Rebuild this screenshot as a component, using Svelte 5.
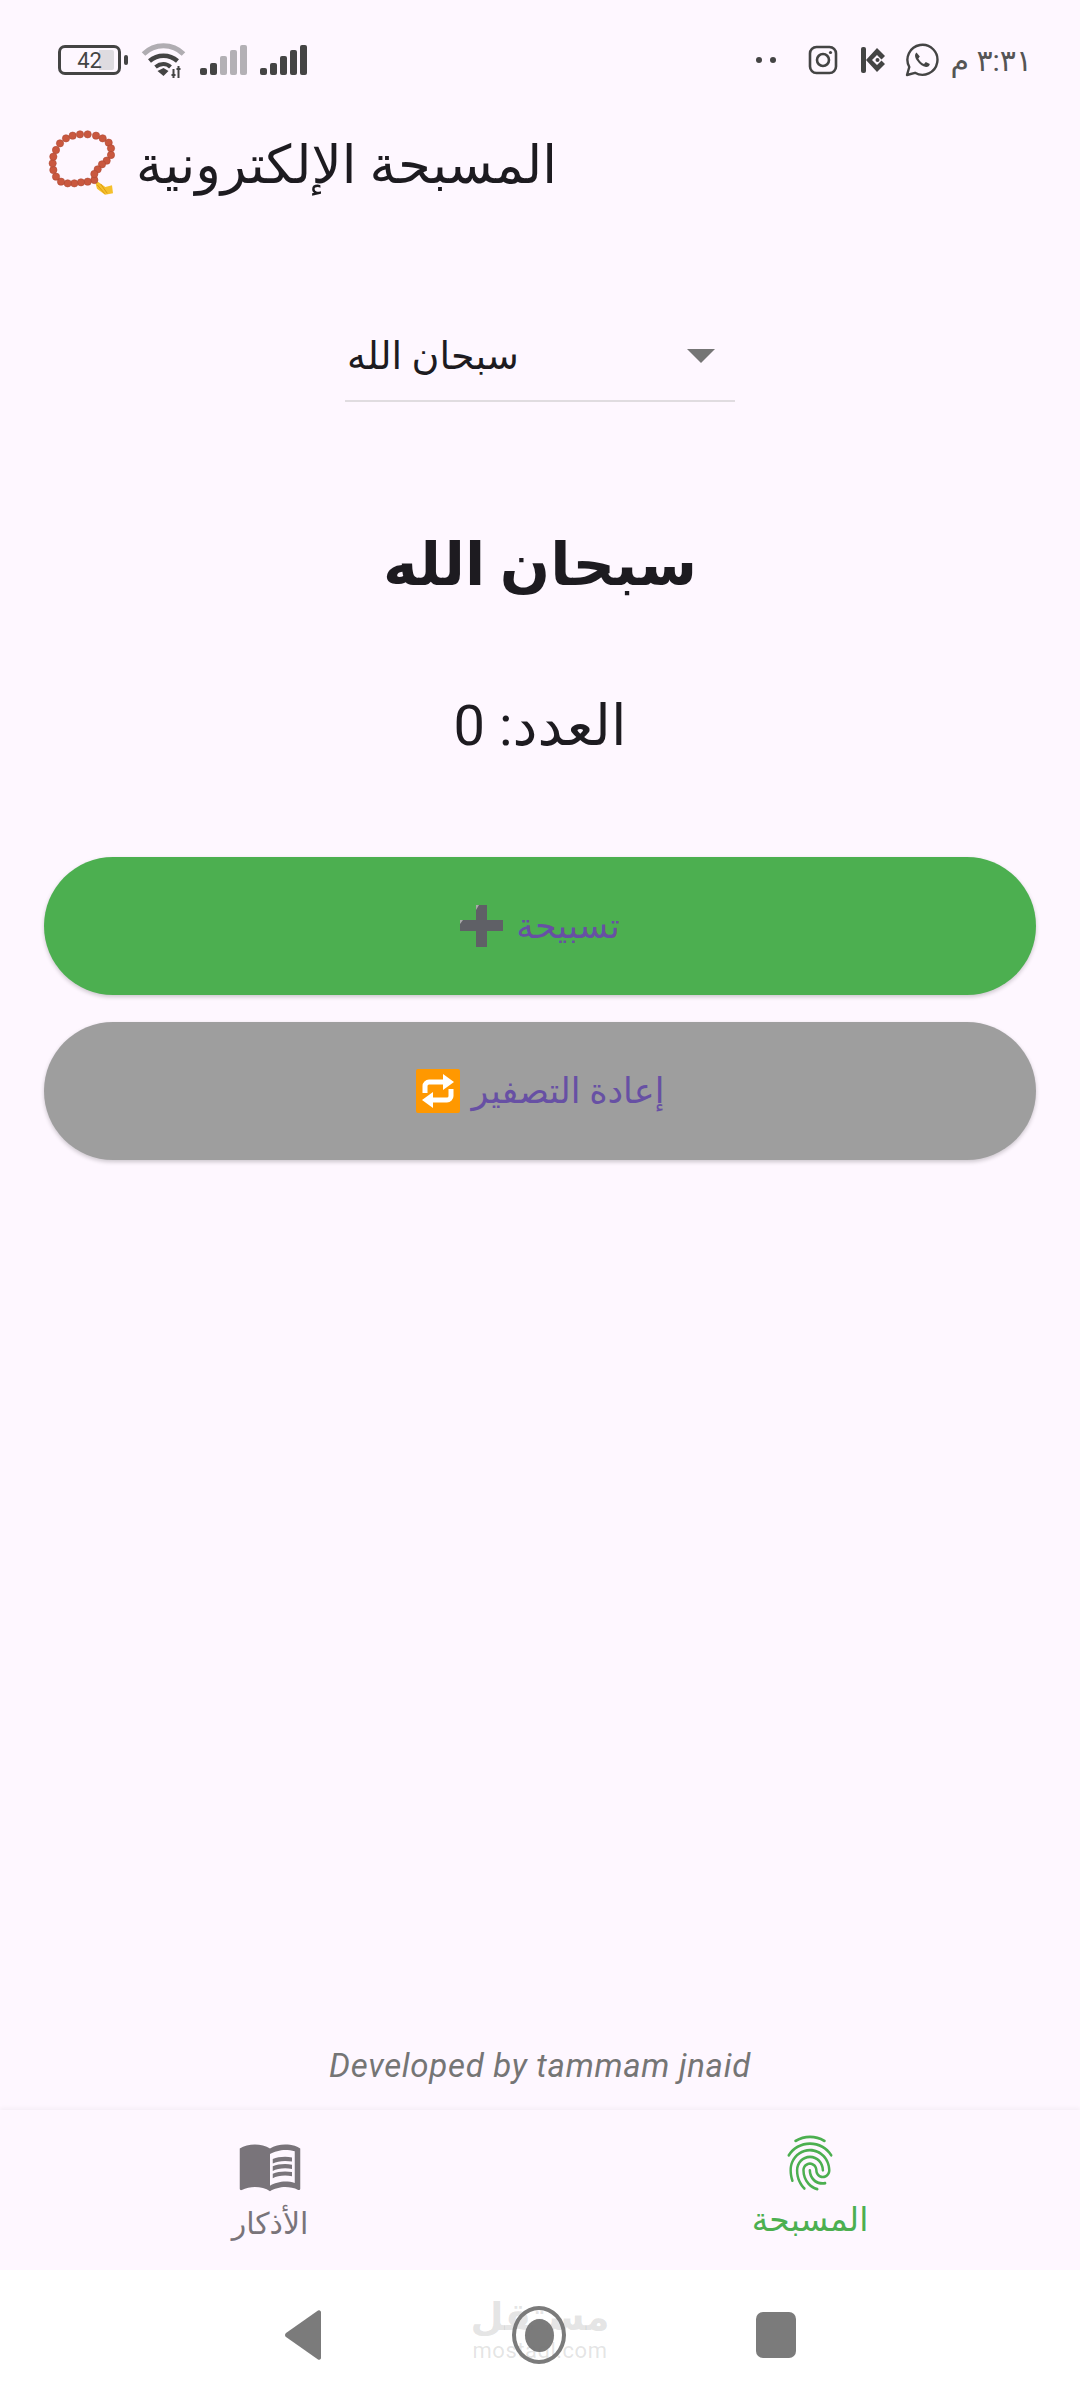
<script>
	// bead centres read off the reference, in 3x units
	const beads = [
		[275,480],[255,485],[235,487],[215,490],[195,490],[175,485],[160,470],[152,450],[150,430],
		[152,410],[160,390],[172,370],[190,355],[210,347],[232,343],[255,343],[280,347],[300,355],
		[318,368],[325,385],[325,405],[312,422],[298,433],[285,448],[275,462]
	];
	const dhikr = 'سبحان الله';
	let count = 0;
</script>

<div class="page">
	<header class="status">
		<div class="status-left">
			<div class="battery">
				<span class="level"></span>
				<span class="num">42</span>
				<span class="cap"></span>
			</div>
			<svg class="wifi" viewBox="0 0 46 36" width="47" height="36">
				<path d="M3 12C14 1 32 1 43 12" fill="none" stroke="#b0adb2" stroke-width="5"/>
				<path d="M9 19c8-7 20-7 28 0" fill="none" stroke="#444" stroke-width="4.500"/>
				<path d="M15 25c5-4 11-4 15 0" fill="none" stroke="#444" stroke-width="4"/>
				<path d="M17 29l6-3 5 3-5 5z" fill="#444"/>
				<path d="M33 36v-9M38 24v12M36 27h4M31 33h4" stroke="#444" stroke-width="2" fill="none"/>
			</svg>
			<div class="bars">
				<i class="b1 on"></i><i class="b2 on"></i><i class="b3"></i><i class="b4"></i><i class="b5"></i>
			</div>
			<div class="bars">
				<i class="b1 on"></i><i class="b2 on"></i><i class="b3 on"></i><i class="b4 on"></i><i class="b5 on"></i>
			</div>
		</div>
		<div class="status-right">
			<div class="dots"><i></i><i></i></div>
			<svg viewBox="0 0 30 30" width="30" height="30" fill="none" stroke="#444" stroke-width="2.600">
				<rect x="2" y="2" width="26" height="26" rx="6.500"/>
				<circle cx="15" cy="15" r="6"/>
				<circle cx="22.500" cy="7.500" r="1.600" fill="#444" stroke="none"/>
			</svg>
			<svg class="ku" viewBox="0 0 26 30" width="26" height="30">
				<rect x="1" y="2" width="5" height="26" rx="2" fill="#444"/>
				<path d="M6 15L17 3l8 8-3.500 3.500L17 10l-5 5 5 5 4.500-4.500L25 19l-8 8z" fill="#444"/>
				<circle cx="17.500" cy="15" r="2" fill="#444"/>
			</svg>
			<svg class="wa" viewBox="0 0 34 34" width="34" height="34" fill="none" stroke="#444" stroke-width="2.400">
				<path d="M2 32l2.300-8A15 15 0 1 1 10 29.800z" stroke-linejoin="round"/>
				<path d="M11.500 9.500c-2 1.500-2 4.500.5 8 2.500 3.500 5.500 6 9 6.500 2 .2 3.500-1.200 3.800-3l-4-2-1.800 2c-2-.7-4.500-3-5.700-5.500l1.500-2z" fill="#444" stroke="none"/>
			</svg>
			<span class="time">٣:٣١ م</span>
		</div>
	</header>

	<div class="appbar">
		<svg class="rosary" viewBox="130 330 210 210" width="70" height="70">
			<path d="M278 488l8-3 22 16 20-5 3 24-24 4-24-18z" fill="#f5c02c"/>
			<path d="M284 495l22 26M294 492l20 28" stroke="#dd9a12" stroke-width="3" fill="none"/>
			{#each beads as b}
				<circle cx={b[0]} cy={b[1]} r="11" fill="#c9583f" stroke="#a8452f" stroke-width="1.500"/>
			{/each}
		</svg>
		<h1 dir="rtl">المسبحة الإلكترونية</h1>
	</div>

	<main>
		<div class="select">
			<span dir="rtl">{dhikr}</span>
			<i class="caret"></i>
		</div>
		<h2 dir="rtl">{dhikr}</h2>
		<p class="count" dir="rtl">العدد: {count}</p>

		<button class="btn green" onclick={() => count++}>
			<svg viewBox="0 0 44 44" width="44" height="44">
				<path d="M16 1h11v15h16v11H27v16H16V27H0V16h16z" fill="#5f6066"/>
				<path d="M16 1h3l-3 5zM0 16h3l-3 4z" fill="#aaa"/>
			</svg>
			<span dir="rtl">تسبيحة</span>
		</button>
		<button class="btn grey" onclick={() => count = 0}>
			<svg viewBox="0 0 44 44" width="44" height="44">
				<rect width="44" height="44" rx="2" fill="#ff9800"/>
				<path d="M9 24v-7a4 4 0 0 1 4-4h16M35 20v7a4 4 0 0 1-4 4H15" fill="none" stroke="#fff" stroke-width="5"/>
				<path d="M27 5l11 8-11 8zM17 23L6 31l11 8z" fill="#fff"/>
			</svg>
			<span dir="rtl">إعادة التصفير</span>
		</button>
	</main>

	<p class="credit">Developed by tammam jnaid</p>

	<nav class="tabs">
		<div class="tab">
			<svg viewBox="0 0 24 24" width="66" height="66" fill="#79747a">
				<path d="M21 5c-1.110-.35-2.330-.5-3.500-.5-1.950 0-4.050.4-5.500 1.500-1.450-1.100-3.550-1.500-5.500-1.500S2.450 4.900 1 6v14.650c0 .25.25.5.5.5.1 0 .15-.05.25-.05C3.100 20.450 5.050 20 6.500 20c1.950 0 4.050.4 5.500 1.500 1.350-.85 3.800-1.500 5.500-1.500 1.650 0 3.350.3 4.750 1.050.1.05.15.05.25.05.25 0 .5-.25.5-.5V6c-.6-.45-1.250-.75-2-1zm0 13.500c-1.100-.35-2.300-.5-3.500-.5-1.700 0-4.150.65-5.500 1.500V8c1.350-.85 3.800-1.500 5.500-1.500 1.200 0 2.400.15 3.500.5v11.500z"/>
				<path d="M17.500 10.500c.88 0 1.730.09 2.500.26V9.240c-.79-.15-1.640-.24-2.500-.24-1.700 0-3.240.29-4.500.83v1.660c1.130-.64 2.700-.99 4.500-.99zM13 12.490v1.660c1.130-.64 2.700-.99 4.500-.99.88 0 1.730.09 2.500.26V11.900c-.79-.15-1.640-.24-2.500-.24-1.700 0-3.240.3-4.500.83zM17.500 14.330c-1.700 0-3.240.29-4.500.83v1.660c1.130-.64 2.700-.99 4.500-.99.88 0 1.730.09 2.500.26v-1.520c-.79-.16-1.640-.24-2.500-.24z"/>
			</svg>
			<span dir="rtl">الأذكار</span>
		</div>
		<div class="tab active">
			<svg viewBox="0 0 24 24" width="60" height="66" preserveAspectRatio="none" fill="#4caf50">
				<path d="M17.810 4.470c-.08 0-.16-.02-.23-.06C15.660 3.420 14 3 12.010 3c-1.980 0-3.860.47-5.570 1.410-.24.13-.54.04-.68-.2-.13-.24-.04-.55.2-.68C7.820 2.520 9.860 2 12.010 2c2.130 0 3.990.47 6.030 1.520.25.13.34.43.21.67-.09.18-.26.28-.44.28zM3.500 9.720c-.1 0-.2-.03-.29-.09-.23-.16-.28-.47-.12-.7.99-1.400 2.250-2.500 3.750-3.270C9.980 4.040 14 4.030 17.150 5.650c1.500.77 2.760 1.860 3.750 3.250.16.22.11.54-.12.7-.23.16-.54.11-.7-.12-.9-1.260-2.040-2.250-3.390-2.940-2.870-1.470-6.540-1.470-9.400.01-1.360.7-2.500 1.700-3.400 2.960-.08.14-.23.21-.39.21zm6.250 12.070c-.13 0-.26-.05-.35-.15-.87-.87-1.340-1.430-2.010-2.640-.69-1.230-1.050-2.730-1.050-4.340 0-2.970 2.540-5.390 5.660-5.390s5.660 2.420 5.660 5.390c0 .28-.22.5-.5.5s-.5-.22-.5-.5c0-2.420-2.090-4.390-4.660-4.390-2.570 0-4.660 1.970-4.660 4.390 0 1.440.32 2.770.93 3.850.64 1.150 1.080 1.640 1.850 2.420.19.2.19.51 0 .71-.11.1-.24.15-.37.15zm7.170-1.850c-1.190 0-2.240-.3-3.100-.89-1.490-1.010-2.380-2.650-2.380-4.390 0-.28.22-.5.5-.5s.5.22.5.5c0 1.410.72 2.740 1.940 3.560.71.48 1.540.71 2.540.71.24 0 .64-.03 1.040-.1.27-.05.53.13.58.41.05.27-.13.53-.41.58-.57.11-1.070.12-1.210.12zM14.910 22c-.04 0-.09-.01-.13-.02-1.590-.44-2.630-1.030-3.720-2.100-1.400-1.390-2.170-3.240-2.170-5.220 0-1.620 1.380-2.940 3.080-2.940 1.700 0 3.080 1.320 3.080 2.940 0 1.070.93 1.940 2.080 1.940s2.080-.87 2.080-1.940c0-3.770-3.250-6.830-7.250-6.830-2.840 0-5.440 1.580-6.610 4.030-.39.81-.59 1.760-.59 2.800 0 .78.07 2.010.67 3.610.1.26-.03.55-.29.64-.26.1-.55-.04-.64-.29-.49-1.310-.73-2.610-.73-3.960 0-1.200.23-2.290.68-3.240 1.330-2.790 4.280-4.600 7.510-4.600 4.550 0 8.250 3.510 8.250 7.830 0 1.620-1.380 2.940-3.080 2.940s-3.080-1.320-3.080-2.940c0-1.070-.93-1.940-2.080-1.940s-2.080.87-2.080 1.940c0 1.710.66 3.310 1.870 4.510.95.94 1.860 1.460 3.270 1.850.27.07.42.35.35.61-.05.23-.26.38-.47.38z"/>
			</svg>
			<span dir="rtl">المسبحة</span>
		</div>
	</nav>

	<div class="sysnav">
		<svg viewBox="0 0 38 54" width="38" height="54">
			<path d="M34 2.500a2 2 0 0 1 3 1.500v46a2 2 0 0 1-3 1.500L2 29a2.500 2.500 0 0 1 0-4z" fill="#7b7b7b"/>
		</svg>
		<div class="home"><i></i></div>
		<span class="recent"></span>
		<div class="mark">
			<b dir="rtl">مستقل</b>
			<span>mostaql.com</span>
		</div>
	</div>
</div>

<style>
	:global(body) {
		margin: 0;
		background: #fef7ff;
	}

	.page {
		position: relative;
		height: 2400px;
		display: flex;
		flex-direction: column;
		background: #fef7ff;
		color: #1d1b20;
		font-family: Roboto, "DejaVu Sans", sans-serif;
		overflow: hidden;
	}

	/* status bar */
	.status {
		height: 120px;
		flex: none;
		display: flex;
		align-items: center;
		justify-content: space-between;
		padding: 0 48px 0 58px;
	}
	.status-left, .status-right {
		display: flex;
		align-items: center;
	}
	.status-left { gap: 13px; }
	.status-right { gap: 22px; }
	.battery {
		position: relative;
		width: 63px;
		height: 30px;
		border: 3px solid #444;
		border-radius: 7px;
		box-sizing: border-box;
		margin-right: 6px;
		display: flex;
		align-items: center;
		justify-content: center;
	}
	.level {
		position: absolute;
		left: 38px; top: 2px; bottom: 2px;
		width: 15px;
		background: #dedbe0;
		border-radius: 0 2px 2px 0;
	}
	.num {
		position: relative;
		font-size: 22px;
		color: #444;
	}
	.cap {
		position: absolute;
		right: -10px; top: 7px;
		width: 4px;
		height: 10px;
		background: #444;
		border-radius: 2px;
	}
	.bars {
		display: flex;
		align-items: flex-end;
		gap: 3px;
		height: 30px;
	}
	.bars i {
		width: 7px;
		background: #b3b0b5;
		border-radius: 2px;
	}
	.bars i.on { background: #444; }
	.b1 { height: 7px; }
	.b2 { height: 12px; }
	.b3 { height: 19px; }
	.b4 { height: 25px; }
	.b5 { height: 30px; }
	.dots {
		display: flex;
		gap: 8px;
		margin-right: 10px;
	}
	.dots i {
		width: 6px;
		height: 6px;
		background: #444;
		border-radius: 50%;
	}
	.wa { margin-left: -3px; }
	.time {
		font-size: 30px;
		color: #555;
		direction: rtl;
		margin-left: -11px;
	}

	/* app bar */
	.appbar {
		height: 90px;
		flex: none;
		display: flex;
		align-items: center;
		gap: 20px;
		padding-left: 46px;
	}
	h1 {
		margin: 0;
		font-size: 53px;
		font-weight: 400;
	}

	/* content */
	main {
		flex: 1;
		display: flex;
		flex-direction: column;
		align-items: center;
		padding: 0 44px;
	}
	.select {
		width: 390px;
		height: 82px;
		margin-top: 110px;
		box-sizing: border-box;
		border-bottom: 2px solid #e0dce0;
		display: flex;
		align-items: center;
		justify-content: space-between;
		padding: 0 20px 8px 2px;
		font-size: 38px;
	}
	.caret {
		width: 0;
		height: 0;
		border: 14px solid transparent;
		border-top-color: #757575;
		border-bottom: 0;
	}
	h2 {
		margin: 112px 0 0;
		height: 102px;
		line-height: 102px;
		font-size: 59px;
		font-weight: 700;
	}
	.count {
		margin: 80px 0 0;
		height: 60px;
		line-height: 60px;
		font-size: 56px;
	}
	.btn {
		width: 100%;
		height: 138px;
		flex: none;
		margin-top: 101px;
		border: 0;
		border-radius: 69px;
		display: flex;
		align-items: center;
		justify-content: center;
		gap: 12px;
		font: inherit;
		font-size: 35px;
		color: #6750a4;
		box-shadow: 0 2px 4px rgba(0,0,0,.2);
	}
	.btn.green { background: #4caf50; }
	.btn.grey {
		background: #9e9e9e;
		margin-top: 27px;
	}

	.credit {
		margin: 0 0 22px;
		height: 44px;
		line-height: 44px;
		text-align: center;
		font-size: 33px;
		font-style: italic;
		color: #757575;
		letter-spacing: .7px;
	}

	/* bottom tabs */
	.tabs {
		height: 160px;
		flex: none;
		display: flex;
		background: #fef7ff;
		box-shadow: 0 -2px 4px rgba(0,0,0,.04);
	}
	.tab {
		flex: 1;
		display: flex;
		flex-direction: column;
		align-items: center;
		padding-top: 22px;
		color: #79747a;
		font-size: 30px;
	}
	.tab span { margin-top: 8px; }
	.tab.active {
		padding-top: 20px;
		color: #4caf50;
		font-size: 33px;
	}
	.tab.active span { margin-top: 4px; }

	/* system nav */
	.sysnav {
		position: relative;
		height: 130px;
		flex: none;
		background: #fff;
		display: flex;
		align-items: center;
		justify-content: center;
		gap: 190px;
	}
	.home {
		width: 54px;
		height: 58px;
		box-sizing: border-box;
		border: 4px solid #7b7b7b;
		border-radius: 50%;
		display: flex;
		align-items: center;
		justify-content: center;
	}
	.home i {
		width: 29px;
		height: 33px;
		background: #7b7b7b;
		border-radius: 50%;
	}
	.recent {
		width: 40px;
		height: 46px;
		background: #7b7b7b;
		border-radius: 7px;
	}
	.mark {
		position: absolute;
		left: 0; right: 0; top: 25px;
		display: flex;
		flex-direction: column;
		align-items: center;
		color: rgba(120,120,120,.2);
		pointer-events: none;
	}
	.mark b {
		font-size: 38px;
		line-height: 44px;
	}
	.mark span {
		font-size: 22px;
		line-height: 24px;
		letter-spacing: .5px;
	}
</style>
